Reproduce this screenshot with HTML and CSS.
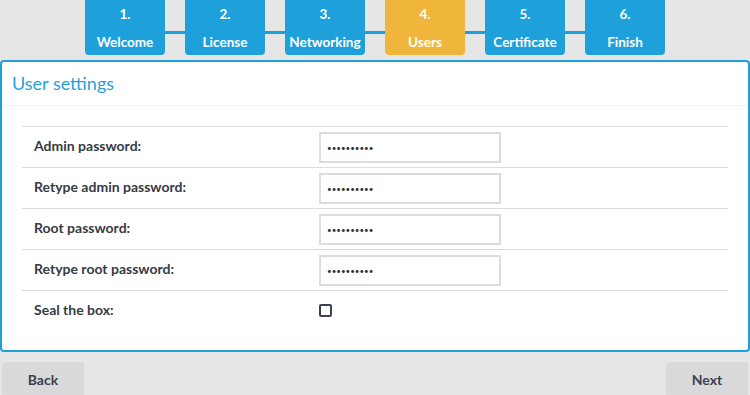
FILE: index.html
```html
<!DOCTYPE html>
<html lang="en">
<head>
    <meta charset="UTF-8">
    <meta name="viewport" content="width=device-width, initial-scale=1.0">
    <title>Setup - Users</title>
    <link rel="stylesheet" href="styles.css">
</head>
<body>
    <!-- Wizard steps -->
    <div class="steps">
        <div class="step"><span class="step-num">1.</span><span class="step-name">Welcome</span></div>
        <span class="connector"></span>
        <div class="step"><span class="step-num">2.</span><span class="step-name">License</span></div>
        <span class="connector"></span>
        <div class="step"><span class="step-num">3.</span><span class="step-name">Networking</span></div>
        <span class="connector"></span>
        <div class="step active"><span class="step-num">4.</span><span class="step-name">Users</span></div>
        <span class="connector"></span>
        <div class="step"><span class="step-num">5.</span><span class="step-name">Certificate</span></div>
        <span class="connector"></span>
        <div class="step"><span class="step-num">6.</span><span class="step-name">Finish</span></div>
    </div>

    <div class="panel">
        <div class="panel-header">User settings</div>
        <div class="panel-body">
            <div class="row">
                <label class="row-label">Admin password:</label>
                <input class="pw-input" type="password" value="0123456789">
            </div>
            <div class="row">
                <label class="row-label">Retype admin password:</label>
                <input class="pw-input" type="password" value="0123456789">
            </div>
            <div class="row">
                <label class="row-label">Root password:</label>
                <input class="pw-input" type="password" value="0123456789">
            </div>
            <div class="row">
                <label class="row-label">Retype root password:</label>
                <input class="pw-input" type="password" value="0123456789">
            </div>
            <div class="row">
                <label class="row-label">Seal the box:</label>
                <input class="check" type="checkbox">
            </div>
        </div>
    </div>

    <div class="footer">
        <button class="nav-btn">Back</button>
        <button class="nav-btn">Next</button>
    </div>
</body>
</html>
```

FILE: styles.css
```css
body {
    margin: 0;
    background: #e6e6e6;
    font-family: Lato, 'Open Sans', Arial, sans-serif;
    color: #353b45;
}

/* Wizard steps */
.steps {
    display: flex;
    padding-left: 85px;
    height: 55px;
}

.step {
    width: 80px;
    height: 55px;
    background: #1ea0db;
    border-radius: 0 0 4px 4px;
    color: #fff;
    font-weight: bold;
    font-size: 13.5px;
    display: flex;
    flex-direction: column;
    align-items: center;
    box-sizing: border-box;
    padding-top: 5px;
}

.step.active {
    background: #f0b53b;
}

.step-num {
    line-height: 18px;
}

.step-name {
    margin-top: 10px;
    line-height: 18px;
    white-space: nowrap;
}

.connector {
    width: 20px;
    height: 3px;
    margin-top: 31px;
    background: #1ea0db;
}

/* Panel */
.panel {
    margin-top: 5px;
    background: #fff;
    border: 2px solid #1ea0db;
    border-radius: 4px;
}

.panel-header {
    padding: 0 10px;
    height: 43px;
    line-height: 42px;
    font-size: 18px;
    color: #2a9fd9;
    border-bottom: 1px solid #f0f0f0;
}

.panel-body {
    padding: 20px 20px 19px;
}

.row {
    display: flex;
    align-items: center;
    height: 40px;
    border-top: 1px solid #dcdcdc;
}

.row-label {
    width: 285px;
    padding-left: 12px;
    margin-bottom: 3px;
    font-size: 14px;
    font-weight: bold;
}

.pw-input {
    width: 182px;
    height: 31px;
    box-sizing: border-box;
    border: 2px solid #dcdcdc;
    padding: 0 6px;
    margin-top: 1px;
    font-family: Lato, Arial, sans-serif;
    font-size: 8px;
    color: #333;
    outline: none;
}

.check {
    -webkit-appearance: none;
    appearance: none;
    width: 13px;
    height: 13px;
    margin: 0 0 1px 0;
    border: 2px solid #3d4250;
    border-radius: 2px;
    box-sizing: border-box;
    background: #fff;
}

/* Footer buttons */
.footer {
    display: flex;
    justify-content: space-between;
    padding: 0 2px;
    margin-top: 10px;
}

.nav-btn {
    width: 82px;
    height: 34px;
    border: none;
    border-radius: 3px;
    background: #d9d9d9;
    font-family: Lato, Arial, sans-serif;
    font-weight: bold;
    font-size: 14px;
    color: #3a4150;
    padding: 0;
    cursor: pointer;
}
```
